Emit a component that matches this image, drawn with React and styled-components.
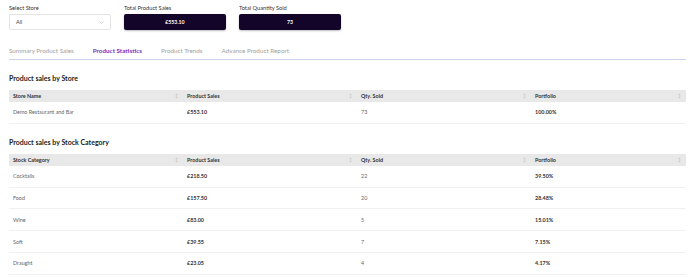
import React from "react";
import styled, { createGlobalStyle } from "styled-components";

const Global = createGlobalStyle`
  html, body { margin: 0; padding: 0; background: #fff; }
  body { font-family: Lato, "Open Sans", sans-serif; color: #333; }
`;

const Page = styled.div`
  padding: 4px 2px 0 9px;
`;

const FilterRow = styled.div`
  display: flex;
  gap: 13px;
`;

const Field = styled.div`
  width: 102px;
  display: flex;
  flex-direction: column;
  gap: 3px;
`;

const Label = styled.div`
  font-size: 5.7px;
  line-height: 7px;
  color: #333;
`;

const SelectBox = styled.div`
  height: 16px;
  box-sizing: border-box;
  border: 1px solid #e4e4e4;
  border-radius: 2px;
  display: flex;
  align-items: center;
  justify-content: space-between;
  padding: 0 6px 0 6px;
  font-size: 5.5px;
  color: #444;
`;

const StatBox = styled.div`
  height: 16px;
  background: #13052a;
  border-radius: 2px;
  display: flex;
  align-items: center;
  justify-content: center;
  color: #fff;
  font-weight: 700;
  font-size: 5.2px;
  box-shadow: 0 1px 2px rgba(0,0,0,0.25);
`;

const Tabs = styled.div`
  margin-top: 17px;
  display: flex;
  gap: 19px;
  border-bottom: 1px solid #c9d4ea;
  padding-bottom: 4px;
`;

const Tab = styled.div`
  font-size: 6.3px;
  line-height: 8px;
  color: ${p => (p.$active ? "#7a2fc0" : "#a0a0a0")};
  font-weight: ${p => (p.$active ? 700 : 400)};
`;

const Heading = styled.div`
  font-size: 7px;
  font-weight: 700;
  color: #222;
  margin-top: 13px;
  margin-bottom: 7px;
  line-height: 10px;
`;

const Table = styled.div`
  display: flex;
  flex-direction: column;
`;

const Row = styled.div`
  display: grid;
  grid-template-columns: 174px 174px 174px 1fr;
  height: ${p => (p.$head ? "12px" : "21.8px")};
  background: ${p => (p.$head ? "#e8e8e8" : "transparent")};
  border-bottom: ${p => (p.$head ? "none" : "1px solid #f0f0f0")};
  box-sizing: border-box;
`;

const Cell = styled.div`
  display: flex;
  align-items: center;
  justify-content: space-between;
  padding: 0 5px 0 4px;
  font-size: 5.4px;
  font-weight: ${p => (p.$bold ? 700 : 400)};
  color: ${p => (p.$bold ? "#333" : "#666")};
`;

const SortIcon = () => (
  <svg width="3" height="6" viewBox="0 0 3 6">
    <path d="M1.5 0.5 L2.7 2.2 L0.3 2.2 Z" fill="#c4c4c4" />
    <path d="M1.5 5.5 L2.7 3.8 L0.3 3.8 Z" fill="#c4c4c4" />
  </svg>
);

const Chevron = () => (
  <svg width="5" height="3" viewBox="0 0 5 3">
    <path d="M0.5 0.5 L2.5 2.5 L4.5 0.5" stroke="#bbb" strokeWidth="0.6" fill="none" />
  </svg>
);

const HeadRow = ({ cols }) => (
  <Row $head>
    {cols.map(c => (
      <Cell key={c} $bold>
        {c}
        <SortIcon />
      </Cell>
    ))}
  </Row>
);

const categories = [
  ["Cocktails", "£218.50", "22", "39.50%"],
  ["Food", "£157.50", "20", "28.48%"],
  ["Wine", "£83.00", "5", "15.01%"],
  ["Soft", "£39.55", "7", "7.15%"],
  ["Draught", "£23.05", "4", "4.17%"],
];

const DataRow = ({ r }) => (
  <Row>
    <Cell>{r[0]}</Cell>
    <Cell $bold>{r[1]}</Cell>
    <Cell>{r[2]}</Cell>
    <Cell $bold>{r[3]}</Cell>
  </Row>
);

export default function App() {
  return (
    <Page>
      <Global />
      <FilterRow>
        <Field>
          <Label>Select Store</Label>
          <SelectBox>
            All
            <Chevron />
          </SelectBox>
        </Field>
        <Field>
          <Label>Total Product Sales</Label>
          <StatBox>£553.10</StatBox>
        </Field>
        <Field>
          <Label>Total Quantity Sold</Label>
          <StatBox>73</StatBox>
        </Field>
      </FilterRow>
      <Tabs>
        <Tab>Summary Product Sales</Tab>
        <Tab $active>Product Statistics</Tab>
        <Tab>Product Trends</Tab>
        <Tab>Advance Product Report</Tab>
      </Tabs>
      <Heading>Product sales by Store</Heading>
      <Table>
        <HeadRow cols={["Store Name", "Product Sales", "Qty. Sold", "Portfolio"]} />
        <DataRow r={["Demo Restaurant and Bar", "£553.10", "73", "100.00%"]} />
      </Table>
      <Heading>Product sales by Stock Category</Heading>
      <Table>
        <HeadRow cols={["Stock Category", "Product Sales", "Qty. Sold", "Portfolio"]} />
        {categories.map(r => (
          <DataRow key={r[0]} r={r} />
        ))}
      </Table>
    </Page>
  );
}
